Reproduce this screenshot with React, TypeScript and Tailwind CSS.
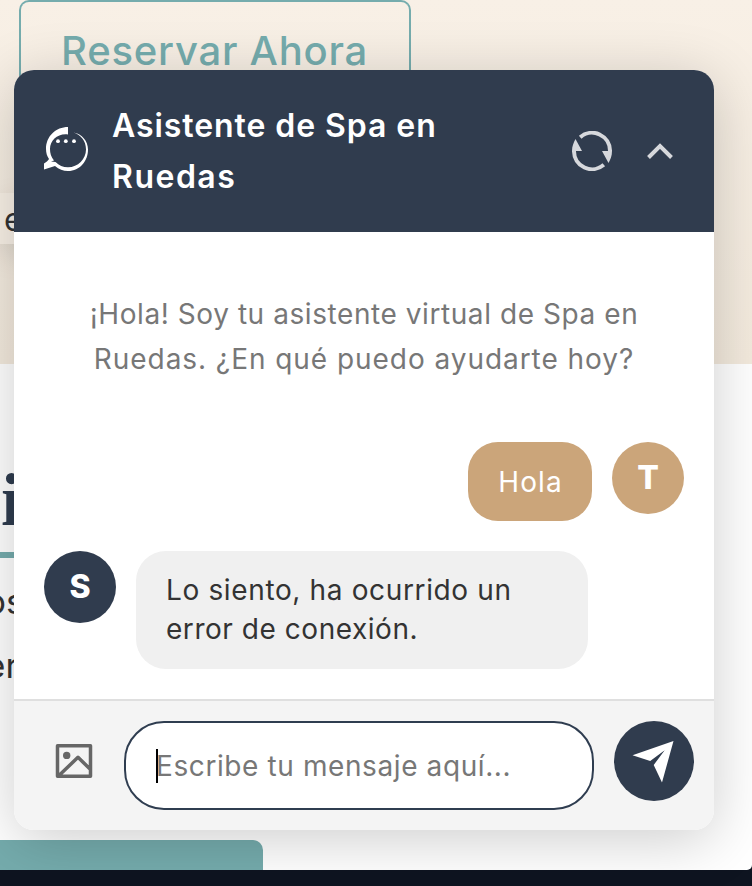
import React from "react";

function ChatIcon() {
  return (
    <svg className="h-11 w-11 shrink-0" viewBox="0 0 44 44" fill="white">
      <path d="M24 0C12 0 2 9 2 22c0 4 1 7 3 10-1 2-3 3-5 4.500v6l11-3.500c4 3.500 8 5 13 5 12 0 20-10 20-21.500C44 14 38 7 29.500 5.500 37 8 42 14 42 22.500 42 32 34 40.300 24 40.300c-5 0-9-2-12.500-5.300l-4.500-.4 3-1C7 30 6 26 6 22 6 13 14 6.200 24 7.500z" />
      <circle cx="14" cy="14.200" r="1.900" />
      <circle cx="21.800" cy="14.200" r="1.900" />
      <circle cx="30" cy="14.200" r="1.900" />
    </svg>
  );
}

function RefreshIcon() {
  return (
    <svg className="h-10 w-10" viewBox="0 0 40 40" fill="none" stroke="#d6d8dc" strokeWidth="4">
      <path d="M8.200 6.200A18 18 0 0 1 38 20" />
      <path d="M31.800 33.800A18 18 0 0 1 2 20" />
      <path d="M30 20h10c0 5-1.500 8-3.500 12zM10 20H0c0-5 1.500-8 3.500-12z" fill="#d6d8dc" stroke="none" />
    </svg>
  );
}

function Avatar({ letter, className }: { letter: string; className: string }) {
  return (
    <div className={`flex h-[72px] w-[72px] shrink-0 items-center justify-center rounded-full text-[32px] font-extrabold leading-none text-white ${className}`}>
      {letter}
    </div>
  );
}

function Page() {
  return (
    <div className="flex h-[886px] flex-col bg-[#0e1420]">
      <div className="flex h-[870px] flex-col overflow-hidden rounded-br-[5px] bg-white">
        <section className="h-[364px] shrink-0 bg-gradient-to-b from-[#f8f0e6] to-[#f3eadd]">
          <div className="ml-[19px] h-[193px] w-[392px] rounded-t-[10px] border-2 border-b-0 border-[#75acad] pl-[40px] pt-[24px]">
            <span className="block whitespace-nowrap text-[40px] font-medium leading-[50px] tracking-[0.78px] text-[#75acad]">Reservar Ahora</span>
          </div>
          <div className="h-[51px] w-[60px] bg-[#f8f0e6] pl-[4px] text-[32px] leading-[53px] text-[#333] shadow-[0_10px_30px_rgba(0,0,0,0.12)]">e</div>
        </section>
        <section className="flex h-[506px] shrink-0 flex-col items-start">
          <h2 className="mt-[96px] h-[92px] pl-px font-['Liberation_Serif',serif] text-[74px] font-bold leading-[80px] text-[#2f3c4f]">i</h2>
          <div className="h-[6px] w-[80px] bg-[#75acad]" />
          <div className="-ml-[15px] mt-[11px] text-[35px] leading-[64px] text-[#333]">
            <p>os</p>
            <p>er</p>
          </div>
          <div className="mt-auto h-[30px] w-[263px] rounded-tr-[10px] bg-[#75acad]" />
        </section>
      </div>
    </div>
  );
}

function ChatWidget() {
  return (
    <main className="absolute left-[14px] top-[70px] flex h-[760px] w-[700px] flex-col overflow-hidden rounded-[20px] bg-white shadow-[0_10px_60px_rgba(0,0,0,0.2)]">
      <header className="flex h-[162px] shrink-0 items-center bg-[#303c4e] px-[30px]">
        <div className="-mt-[5px]"><ChatIcon /></div>
        <h1 className="ml-6 w-[440px] text-[32px] font-semibold leading-[51px] text-white">
          <span className="block tracking-[0.93px]">Asistente de Spa en</span>
          <span className="block tracking-[1.5px]">Ruedas</span>
        </h1>
        <div className="ml-5 flex items-center gap-[35px]">
          <RefreshIcon />
          <svg className="h-[16px] w-[26px]" viewBox="0 0 26 16" fill="none" stroke="#d6d8dc" strokeWidth="4"><path d="M1.500 14.500 13 3l11.500 11.500" /></svg>
        </div>
      </header>
      <div className="flex h-[467px] shrink-0 flex-col px-[30px]">
        <div className="mt-[60px] whitespace-nowrap text-center text-[28px] leading-[45px] text-[#777]">
          <p className="tracking-[0.57px]">¡Hola! Soy tu asistente virtual de Spa en</p>
          <p className="tracking-[0.95px]">Ruedas. ¿En qué puedo ayudarte hoy?</p>
        </div>
        <div className="mt-[60px] flex items-start justify-end gap-5">
          <div className="flex h-[79px] w-[124px] items-center justify-center rounded-[30px] bg-[#cba57a] pl-px text-[28px] tracking-[1.1px] text-white">Hola</div>
          <Avatar letter="T" className="bg-[#cba57a]" />
        </div>
        <div className="mt-[30px] flex items-start gap-5">
          <Avatar letter="S" className="bg-[#303c4e]" />
          <div className="h-[118px] w-[452px] whitespace-nowrap rounded-[30px] bg-[#f0f0f0] px-[30px] pt-5 text-[28px] leading-[39px] text-[#333]">
            <p className="tracking-[0.64px]">Lo siento, ha ocurrido un</p>
            <p className="tracking-[0.54px]">error de conexión.</p>
          </div>
        </div>
      </div>
      <footer className="flex flex-1 items-start border-t-2 border-[#dfdfdf] bg-[#f4f4f4] px-5 pt-5">
        <svg className="ml-[21px] mt-[22px] h-[36px] w-[38px] shrink-0" viewBox="0 0 38 36" fill="none" stroke="#666" strokeWidth="3.500" strokeLinejoin="round">
          <path d="M2.500 2.800h33v30.400h-33zM4.500 32 23 14.300 35 26" />
          <circle cx="11.700" cy="12.400" r="3.700" fill="#666" stroke="none" />
        </svg>
        <div className="ml-[31px] flex h-[89px] w-[470px] items-center rounded-[40px] border-2 border-[#2f3d50] bg-white pl-[30px]">
          <div className="h-[34px] w-[2px] shrink-0 bg-black" />
          <span className="-ml-[2px] whitespace-nowrap text-[28px] tracking-[0.6px] text-[#777]">Escribe tu mensaje aquí...</span>
        </div>
        <div className="ml-5 h-20 w-20 shrink-0 rounded-full bg-[#303c4e]">
          <svg className="h-20 w-20" viewBox="0 0 80 80" fill="white"><path d="M59.500 20 18.500 34.200 36.200 40 50.700 29.300 39.700 44 48 61.500z" /></svg>
        </div>
      </footer>
    </main>
  );
}

export default function App() {
  return (
    <div className="relative h-[886px] w-[752px] overflow-hidden font-['Inter',sans-serif]">
      <Page />
      <ChatWidget />
    </div>
  );
}
